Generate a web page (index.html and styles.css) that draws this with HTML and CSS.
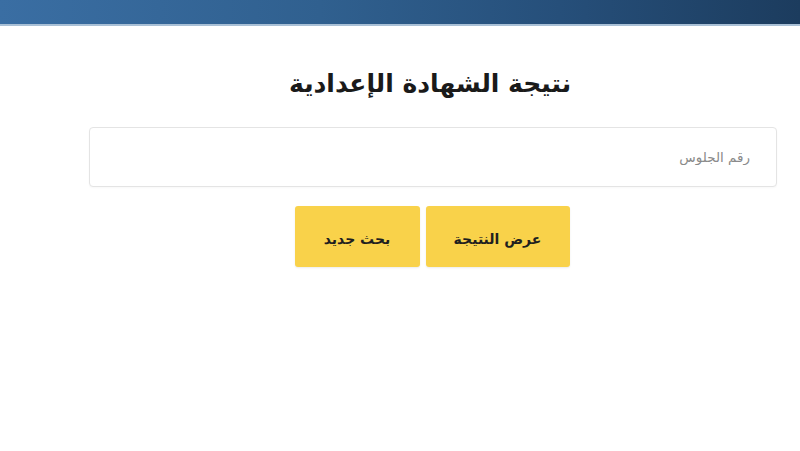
FILE: index.html
```html
<!DOCTYPE html>
<html lang="ar" dir="rtl">
<head>
<meta charset="utf-8">
<link rel="stylesheet" href="styles.css">
</head>
<body>
<header class="topbar"></header>
<main class="content">
  <h1 class="title">نتيجة الشهادة الإعدادية</h1>
  <div class="field">
    <input class="input" type="text" placeholder="رقم الجلوس">
  </div>
  <div class="actions">
    <button class="btn">عرض النتيجة</button>
    <button class="btn btn-new">بحث جديد</button>
  </div>
</main>
</body>
</html>
```
FILE: styles.css
```css
* { box-sizing: border-box; }
html, body { margin: 0; padding: 0; background: #fff; }
body {
  font-family: "DejaVu Sans", "Noto Sans", sans-serif;
  color: #222;
  width: 800px;
  height: 451px;
  overflow: hidden;
}
.topbar {
  height: 26px;
  background: linear-gradient(90deg, #3a6ea3 0%, #30608f 40%, #264f7a 70%, #1c3c5e 100%);
  border-bottom: 2px solid #a9c0d6;
}
.content {
  width: 688px;
  margin: 0 23px 0 0;
  display: flex;
  flex-direction: column;
  align-items: center;
}
.title {
  margin: 38px 0 0;
  height: 40px;
  font-size: 25px;
  font-weight: bold;
  color: #1a1a1a;
  line-height: 40px;
  letter-spacing: -0.5px;
  padding-right: 6px;
}
.field {
  width: 100%;
  margin-top: 23px;
}
.input {
  display: block;
  width: 100%;
  height: 60px;
  border: 1px solid #e4e4e4;
  border-radius: 4px;
  padding: 0 26px;
  font-family: "DejaVu Sans", sans-serif;
  font-size: 13.5px;
  direction: rtl;
  box-shadow: 0 1px 2px rgba(0,0,0,0.03);
  outline: none;
}
.input::placeholder { color: #8a8a8a; }
.actions {
  display: flex;
  gap: 6px;
  margin-top: 19px;
  margin-right: 2px;
}
.btn {
  height: 61px;
  width: 144px;
  padding-top: 6px;
  background: #f9d24a;
  border: none;
  border-radius: 3px;
  font-family: "DejaVu Sans", sans-serif;
  font-size: 14px;
  font-weight: bold;
  color: #1f1f1f;
  box-shadow: 0 1px 2px rgba(0,0,0,0.08);
}
.btn-new { width: 125px; }
```
